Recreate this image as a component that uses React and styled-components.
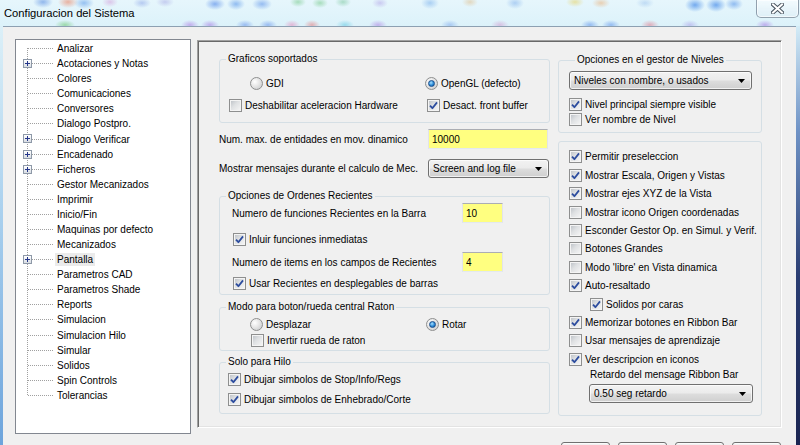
import React from 'react';
import styled, { createGlobalStyle } from 'styled-components';

const Global = createGlobalStyle`
  html, body { margin: 0; padding: 0; }
  body { width: 800px; height: 445px; overflow: hidden; background: #f0f0f0;
    font-family: "Liberation Sans", Arial, sans-serif; }
  * { box-sizing: border-box; }
`;

const FS = '10px';

const blob = (x, y, rgb, rx = 10, ry = 6, a = 0.5) =>
  `radial-gradient(${rx}px ${ry}px at ${x}px ${y}px, rgba(${rgb},${a}), rgba(${rgb},0))`;

const glass = [
  blob(43, 2, '60,120,220'), blob(68, 2, '235,110,70'), blob(84, 3, '70,140,230'),
  blob(110, 2, '200,110,200', 8, 5, 0.35), blob(142, 3, '90,120,220', 9, 5, 0.35),
  blob(165, 2, '120,110,210', 9, 5, 0.3), blob(215, 4, '60,120,230', 10, 6, 0.55),
  blob(236, 4, '60,130,230', 9, 6, 0.5), blob(262, 4, '70,130,230', 10, 6, 0.5),
  blob(298, 2, '90,190,110', 8, 5, 0.45), blob(320, 3, '90,190,110', 8, 5, 0.45),
  blob(343, 2, '80,180,120', 8, 5, 0.4), blob(380, 3, '150,120,220', 8, 5, 0.35),
  blob(430, 3, '80,150,230', 9, 6, 0.4), blob(470, 2, '220,160,80', 8, 5, 0.35),
  blob(515, 3, '90,150,230', 9, 6, 0.4), blob(575, 2, '230,200,60', 9, 5, 0.45),
  blob(601, 3, '235,150,70', 9, 5, 0.4), blob(645, 3, '120,170,230', 9, 5, 0.35),
  blob(695, 5, '40,120,230', 10, 7, 0.6), blob(716, 5, '40,120,230', 10, 7, 0.6),
  blob(734, 4, '60,130,230', 9, 6, 0.5),
  blob(65, 25, '90,190,90', 10, 5, 0.5), blob(190, 25, '160,90,220', 9, 5, 0.45),
  blob(210, 25, '150,90,220', 9, 5, 0.45), blob(245, 25, '70,120,230', 9, 5, 0.45),
  blob(268, 25, '70,120,230', 9, 5, 0.45), blob(292, 25, '230,110,170', 8, 5, 0.45),
  blob(312, 25, '230,90,90', 8, 5, 0.45), blob(345, 25, '70,190,220', 9, 5, 0.45),
  blob(378, 25, '160,100,220', 9, 5, 0.45), blob(450, 25, '90,140,230', 9, 5, 0.4),
  blob(500, 25, '200,100,180', 9, 5, 0.35), blob(590, 25, '60,120,230', 9, 5, 0.45),
  blob(611, 25, '60,120,230', 9, 5, 0.45), blob(650, 25, '225,90,110', 9, 5, 0.45),
  blob(690, 25, '140,110,220', 9, 5, 0.35), blob(765, 25, '150,90,220', 9, 5, 0.45),
  'linear-gradient(180deg, #e6f6fc 0%, #dcf2fa 100%)',
].join(',');

const Window = styled.div`
  width: 800px;
  height: 445px;
  overflow: hidden;
  display: flex;
  flex-direction: column;
`;

const TitleBar = styled.div`
  height: 26px;
  flex: none;
  display: flex;
  justify-content: space-between;
  align-items: flex-start;
  background: ${glass};
`;

const Title = styled.div`
  padding: 6px 0 0 4px;
  font-size: 11.2px;
  line-height: 14px;
  color: #000;
`;

const CloseButton = styled.div`
  width: 43px;
  height: 18px;
  margin-right: 1px;
  border: 1px solid rgba(70, 90, 110, 0.55);
  border-top: none;
  border-radius: 0 0 5px 5px;
  background: linear-gradient(180deg, rgba(255,255,255,0.55), rgba(220,236,245,0.6));
  box-shadow: inset 0 0 0 1px rgba(255,255,255,0.6);
  display: flex;
  align-items: center;
  justify-content: center;
`;

const Body = styled.div`
  flex: 1;
  display: flex;
  min-height: 0;
`;

const Frame = styled.div`
  width: ${p => p.$w}px;
  flex: none;
  background: ${p => p.$bg};
`;

const Client = styled.div`
  flex: 1;
  display: flex;
  align-items: flex-start;
  background: #f0f0f0;
  border-top: 1px solid #8da0b2;
  padding: 12px 0 0 12px;
  font-size: ${FS};
  color: #000;
`;

const Tree = styled.div`
  width: 176px;
  height: 395px;
  flex: none;
  background: #fff;
  border: 1px solid #828790;
  padding-top: 1px;
`;

const TreeList = styled.div`
  position: relative;
  &::before {
    content: '';
    position: absolute;
    left: 11px;
    top: 7px;
    height: ${23 * 15.08}px;
    border-left: 1px dotted #a0a0a0;
  }
`;

const TreeRow = styled.div`
  height: 15.08px;
  display: flex;
  align-items: center;
`;

const Branch = styled.span`
  position: relative;
  width: 39px;
  height: 100%;
  flex: none;
  display: flex;
  align-items: center;
`;

const BranchLine = styled.span`
  margin-left: 12px;
  width: 25px;
  border-top: 1px dotted #a0a0a0;
`;

const Expander = styled.span`
  position: absolute;
  left: 7px;
  top: 3px;
  width: 9px;
  height: 9px;
  z-index: 1;
  border: 1px solid #8e99a8;
  background: linear-gradient(180deg, #ffffff, #d8dde3);
  display: flex;
  align-items: center;
  justify-content: center;
`;

const TreeLabel = styled.span`
  padding: 0 2px;
  line-height: 13px;
  white-space: nowrap;
  background: ${p => (p.$sel ? '#ebebeb' : 'transparent')};
`;

const MainCol = styled.div`
  margin-left: 6px;
  margin-top: 1px;
  width: 585px;
  flex: none;
  display: flex;
  flex-direction: column;
`;

const Panel = styled.div`
  height: 388px;
  border-top: 1px solid #a0a0a0;
  border-left: 1px solid #a0a0a0;
  border-right: 1px solid #ffffff;
  border-bottom: 1px solid #ffffff;
  box-shadow: inset 1px 1px 0 #696969, inset -1px -1px 0 #e3e3e3;
  display: flex;
  align-items: flex-start;
  padding: 12px 0 0 21px;
  gap: 8px;
`;

const Column = styled.div`
  width: ${p => p.$w}px;
  flex: none;
  display: flex;
  flex-direction: column;
  padding-top: ${p => p.$pt || 0}px;
`;

const Group = styled.fieldset`
  margin: ${p => p.$mt || 0}px 0 0 0;
  padding: ${p => p.$pad};
  height: ${p => p.$h}px;
  border: 1px solid #d5dfe5;
  border-radius: 3px;
  min-width: 0;
  flex: none;
  display: flex;
  flex-direction: column;
`;

const Legend = styled.legend`
  margin-left: 6px;
  padding: 0 2px;
  font-size: ${FS};
  line-height: 12px;
`;

const OptionGrid = styled.div`
  display: grid;
  grid-template-columns: 205px 1fr;
  grid-auto-rows: 16px;
  row-gap: ${p => p.$gap || 0}px;
`;

const Item = styled.label`
  display: flex;
  align-items: center;
  gap: 3px;
  height: ${p => p.$h || 16}px;
  margin-top: ${p => p.$mt || 0}px;
  padding-left: ${p => p.$indent || 0}px;
  white-space: nowrap;
  line-height: 13px;
`;

const Box = styled.span`
  width: 13px;
  height: 13px;
  flex: none;
  border: 1px solid #8e8f8f;
  background: linear-gradient(135deg, #b9bec4 0%, #dfe1e3 45%, #f7f7f7 100%);
  box-shadow: inset 0 0 0 1px #f4f4f4;
  display: flex;
  align-items: center;
  justify-content: center;
`;

const RadioRing = styled.span`
  width: 13px;
  height: 13px;
  flex: none;
  border-radius: 50%;
  border: 1px solid #8e8f8f;
  background: radial-gradient(circle at 35% 35%, #ffffff 0%, #e6e6e6 45%, #c4c6c8 100%);
  display: flex;
  align-items: center;
  justify-content: center;
`;

const RadioDot = styled.span`
  width: 7px;
  height: 7px;
  border-radius: 50%;
  border: 1px solid #1b4f8c;
  background: radial-gradient(circle at 40% 35%, #a8e0ff 0%, #2a8ad8 55%, #0c4f93 100%);
`;

const FieldRow = styled.div`
  display: flex;
  align-items: center;
  height: ${p => p.$h}px;
  margin-top: ${p => p.$mt || 0}px;
  padding-left: ${p => p.$indent || 0}px;
  flex: none;
`;

const FieldLabel = styled.span`
  width: ${p => p.$w}px;
  flex: none;
  white-space: nowrap;
`;

const YellowInput = styled.input`
  width: ${p => p.$w}px;
  height: 100%;
  flex: none;
  margin: 0;
  padding: 0 0 0 3px;
  background: #ffff80;
  border: 1px solid #e2e3ea;
  border-top-color: #abadb3;
  border-bottom-color: #e3e9ef;
  font-family: "Liberation Sans", Arial, sans-serif;
  font-size: ${FS};
  color: #000;
  outline: none;
`;

const Combo = styled.div`
  width: ${p => p.$w}px;
  height: 19px;
  flex: none;
  margin-top: ${p => p.$mt || 0}px;
  margin-left: ${p => p.$ml || 0}px;
  border: 1px solid #707070;
  border-radius: 3px;
  background: linear-gradient(180deg, #f2f2f2 0%, #ebebeb 48%, #dddddd 52%, #cfcfcf 100%);
  box-shadow: inset 0 0 0 1px rgba(255,255,255,0.7);
  display: flex;
  align-items: center;
  justify-content: space-between;
  padding: 0 6px 0 4px;
  white-space: nowrap;
`;

const Caption = styled.div`
  height: 14px;
  line-height: 14px;
  padding-left: ${p => p.$indent || 0}px;
  flex: none;
`;

const ButtonRow = styled.div`
  margin-top: 14px;
  display: flex;
  justify-content: flex-end;
  gap: 8px;
  padding-right: 1px;
`;

const Button = styled.div`
  width: 49px;
  height: 23px;
  flex: none;
  border: 1px solid #707070;
  border-radius: 3px;
  background: linear-gradient(180deg, #f2f2f2 0%, #ebebeb 48%, #dddddd 52%, #cfcfcf 100%);
  box-shadow: inset 0 0 0 1px rgba(255,255,255,0.7);
  display: flex;
  justify-content: center;
  align-items: flex-start;
  padding-top: 1px;
`;

const Check = ({ on }) => (
  <Box>
    {on && (
      <svg width="9" height="9" viewBox="0 0 9 9">
        <path d="M1 4.6 L3.4 7.2 L8 1.4" fill="none" stroke="#2c4c9e" strokeWidth="1.8" strokeLinejoin="round" />
      </svg>
    )}
  </Box>
);

const CheckItem = ({ on, children, ...rest }) => (
  <Item {...rest}>
    <Check on={on} />
    <span>{children}</span>
  </Item>
);

const RadioItem = ({ on, children, ...rest }) => (
  <Item {...rest}>
    <RadioRing>{on && <RadioDot />}</RadioRing>
    <span>{children}</span>
  </Item>
);

const Arrow = () => (
  <svg width="7" height="4" viewBox="0 0 7 4">
    <path d="M0 0 H7 L3.5 4 Z" fill="#000" />
  </svg>
);

const TREE = [
  ['Analizar'], ['Acotaciones y Notas', true], ['Colores'], ['Comunicaciones'],
  ['Conversores'], ['Dialogo Postpro.'], ['Dialogo Verificar', true], ['Encadenado', true],
  ['Ficheros', true], ['Gestor Mecanizados'], ['Imprimir'], ['Inicio/Fin'],
  ['Maquinas por defecto'], ['Mecanizados'], ['Pantalla', true, true], ['Parametros CAD'],
  ['Parametros Shade'], ['Reports'], ['Simulacion'], ['Simulacion Hilo'], ['Simular'],
  ['Solidos'], ['Spin Controls'], ['Tolerancias'],
];

const VIEW_OPTS = [
  ['Permitir preseleccion', true],
  ['Mostrar Escala, Origen y Vistas', true],
  ['Mostrar ejes XYZ de la Vista', true],
  ['Mostrar icono Origen coordenadas', false],
  ['Esconder Gestor Op. en Simul. y Verif.', false],
  ['Botones Grandes', false],
  ["Modo 'libre' en Vista dinamica", false],
  ['Auto-resaltado', true],
  ['Solidos por caras', true, 21],
  ['Memorizar botones en Ribbon Bar', true],
  ['Usar mensajes de aprendizaje', false],
  ['Ver descripcion en iconos', true],
];

export default function App() {
  return (
    <>
      <Global />
      <Window>
        <TitleBar>
          <Title>Configuracion del Sistema</Title>
          <CloseButton>
            <svg width="13" height="11" viewBox="0 0 13 11">
              <path d="M2 1.5 L11 9.5 M11 1.5 L2 9.5" stroke="#4a5560" strokeWidth="4" strokeLinecap="square" />
              <path d="M2 1.5 L11 9.5 M11 1.5 L2 9.5" stroke="#ffffff" strokeWidth="2" strokeLinecap="square" />
            </svg>
          </CloseButton>
        </TitleBar>
        <Body>
          <Frame $w={3} $bg="linear-gradient(180deg, #dcf0f8 0%, #a9d0ee 45%, #6da4dc 100%)" />
          <Client>
            <Tree>
              <TreeList>
                {TREE.map(([name, exp, sel]) => (
                  <TreeRow key={name}>
                    <Branch>
                      <BranchLine />
                      {exp && (
                        <Expander>
                          <svg width="7" height="7" viewBox="0 0 7 7">
                            <path d="M1 3.5 H6 M3.5 1 V6" stroke="#24358a" strokeWidth="1" />
                          </svg>
                        </Expander>
                      )}
                    </Branch>
                    <TreeLabel $sel={sel}>{name}</TreeLabel>
                  </TreeRow>
                ))}
              </TreeList>
            </Tree>
            <MainCol>
              <Panel>
                <Column $w={331}>
                  <Group $h={70} $pad="10px 0 0 0">
                    <Legend>Graficos soportados</Legend>
                    <OptionGrid $gap={6}>
                      <RadioItem $indent={30}>GDI</RadioItem>
                      <RadioItem on>OpenGL (defecto)</RadioItem>
                      <CheckItem $indent={9}>Deshabilitar aceleracion Hardware</CheckItem>
                      <CheckItem $indent={2} on>Desact. front buffer</CheckItem>
                    </OptionGrid>
                  </Group>
                  <FieldRow $h={20} $mt={6}>
                    <FieldLabel $w={209}>Num. max. de entidades en mov. dinamico</FieldLabel>
                    <YellowInput $w={120} readOnly value="10000" />
                  </FieldRow>
                  <FieldRow $h={19} $mt={10}>
                    <FieldLabel $w={209}>Mostrar mensajes durante el calculo de Mec.</FieldLabel>
                    <Combo $w={121}>
                      <span>Screen and log file</span>
                      <Arrow />
                    </Combo>
                  </FieldRow>
                  <Group $h={105} $mt={12} $pad="1px 0 0 0">
                    <Legend>Opciones de Ordenes Recientes</Legend>
                    <FieldRow $h={20} $indent={12}>
                      <FieldLabel $w={230}>Numero de funciones Recientes en la Barra</FieldLabel>
                      <YellowInput $w={41} readOnly value="10" />
                    </FieldRow>
                    <CheckItem $indent={13} $mt={8} on>Inluir funciones inmediatas</CheckItem>
                    <FieldRow $h={20} $mt={5} $indent={12}>
                      <FieldLabel $w={230}>Numero de items en los campos de Recientes</FieldLabel>
                      <YellowInput $w={41} readOnly value="4" />
                    </FieldRow>
                    <CheckItem $indent={13} $mt={3} on>Usar Recientes en desplegables de barras</CheckItem>
                  </Group>
                  <Group $h={50} $mt={6} $pad="3px 0 0 0">
                    <Legend>Modo para boton/rueda central Raton</Legend>
                    <OptionGrid>
                      <RadioItem $indent={30}>Desplazar</RadioItem>
                      <RadioItem $indent={1} on>Rotar</RadioItem>
                    </OptionGrid>
                    <CheckItem $indent={31}>Invertir rueda de raton</CheckItem>
                  </Group>
                  <Group $h={58} $mt={5} $pad="3px 0 0 0">
                    <Legend>Solo para Hilo</Legend>
                    <CheckItem $indent={8} on>Dibujar simbolos de Stop/Info/Regs</CheckItem>
                    <CheckItem $indent={8} $mt={4} on>Dibujar simbolos de Enhebrado/Corte</CheckItem>
                  </Group>
                </Column>
                <Column $w={204} $pt={1}>
                  <Group $h={79} $pad="5px 0 0 10px">
                    <Legend>Opciones en el gestor de Niveles</Legend>
                    <Combo $w={183}>
                      <span>Niveles con nombre, o usados</span>
                      <Arrow />
                    </Combo>
                    <CheckItem $h={15} $mt={7} on>Nivel principal siempre visible</CheckItem>
                    <CheckItem $h={15}>Ver nombre de Nivel</CheckItem>
                  </Group>
                  <Group $h={275} $mt={8} $pad="5.8px 0 0 10px">
                    {VIEW_OPTS.map(([label, on, indent]) => (
                      <CheckItem key={label} $h={18.4} $indent={indent} on={on}>{label}</CheckItem>
                    ))}
                    <Caption $indent={21}>Retardo del mensage Ribbon Bar</Caption>
                    <Combo $w={164} $mt={2} $ml={20}>
                      <span>0.50 seg retardo</span>
                      <Arrow />
                    </Combo>
                  </Group>
                </Column>
              </Panel>
              <ButtonRow>
                <Button />
                <Button />
                <Button>
                  <svg width="12" height="10" viewBox="0 0 12 10">
                    <circle cx="6" cy="6" r="5" fill="#7d7d7d" />
                  </svg>
                </Button>
                <Button>
                  <svg width="12" height="10" viewBox="0 0 12 10">
                    <rect x="4" y="2" width="6" height="6" fill="#4a4a4a" />
                  </svg>
                </Button>
              </ButtonRow>
            </MainCol>
          </Client>
          <Frame $w={4} $bg="linear-gradient(180deg, #d4ecf7 0%, #6f93c6 25%, #2a3d72 60%, #1b2552 100%)" />
        </Body>
      </Window>
    </>
  );
}
